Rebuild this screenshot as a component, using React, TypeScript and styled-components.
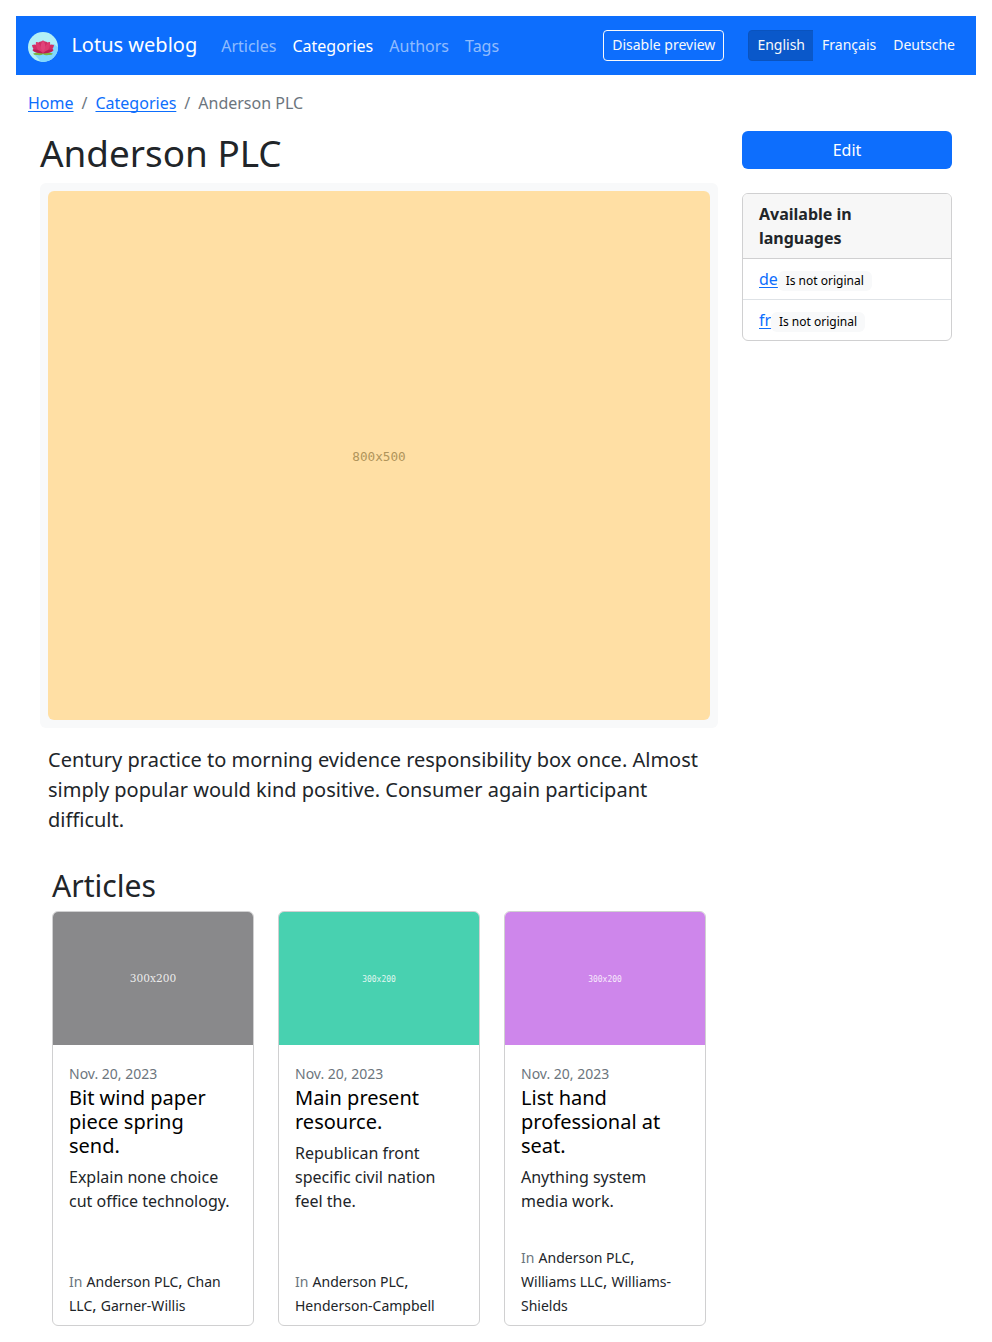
import React from "react";
import styled, { createGlobalStyle } from "styled-components";

const GlobalStyle = createGlobalStyle`
  *, *::before, *::after { box-sizing: border-box; }
  body {
    margin: 0;
    background: #fff;
    color: #212529;
    font: 400 16px/1.5 "Noto Sans", "Liberation Sans", sans-serif;
  }
  h1, h2, h5, p, ul, ol { margin: 0; padding: 0; }
  ul, ol { list-style: none; }
`;

const Page = styled.div`
  padding: 16px;
`;

const Navbar = styled.nav`
  display: flex;
  align-items: center;
  height: 59px;
  padding: 0 12px;
  background: #0d6efd;
`;

const Brand = styled.a`
  display: flex;
  align-items: flex-start;
  gap: 13.4px;
  height: 32px;
  margin-right: 16px;
  color: #fff;
  font-size: 20px;
  line-height: 30px;
  white-space: nowrap;
  svg { display: block; margin-top: 2px; }
`;

const BrandName = styled.span`
  display: block;
`;

const NavLinks = styled.ul`
  display: flex;
  flex: 1;
  padding-top: 1px;
`;

const NavLink = styled.li<{ $active?: boolean }>`
  padding: 8px;
  color: ${(p) => (p.$active ? "#fff" : "rgba(255, 255, 255, 0.55)")};
`;

const SmallButton = styled.button`
  height: 31px;
  padding: 3px 8px 5px;
  border: 1px solid #f8f9fa;
  border-radius: 4px;
  background: transparent;
  color: #f8f9fa;
  font: 400 14px/21px "Noto Sans", sans-serif;
  white-space: nowrap;
`;

const LanguageGroup = styled.div`
  display: flex;
  margin-left: 24px;
`;

const LanguageButton = styled(SmallButton)<{ $active?: boolean }>`
  border-color: ${(p) => (p.$active ? "#0a53be" : "#0d6efd")};
  border-radius: ${(p) => (p.$active ? "4px 0 0 4px" : "0")};
  background: ${(p) => (p.$active ? "#0a58ca" : "#0d6efd")};
  & + & { margin-left: -1px; }
`;

const Breadcrumb = styled.ol`
  display: flex;
  margin: 16px 12px;
`;

const Crumb = styled.li`
  color: #6c757d;
  & + &::before {
    content: "/";
    padding: 0 8px;
  }
`;

const Link = styled.a`
  color: #0d6efd;
  text-decoration: underline 1px;
  text-decoration-skip-ink: none;
  text-underline-offset: 2px;
`;

const Columns = styled.div`
  display: grid;
  grid-template-columns: 678px 210px;
  column-gap: 24px;
  align-items: start;
  padding: 0 24px;
`;

const Main = styled.main`
  min-width: 0;
`;

const Title = styled.h1`
  margin-bottom: 8px;
  font-size: 36.88px;
  font-weight: 400;
  line-height: 1.2;
`;

const CoverFrame = styled.div`
  padding: 8px;
  border-radius: 6px;
  background: #f8f9fa;
`;

const Cover = styled.div`
  display: flex;
  align-items: center;
  justify-content: center;
  height: 529px;
  padding-top: 3px;
  border-radius: 6px;
  background: #ffdfa4;
  color: #b0945a;
  font: 12.7px/1 "DejaVu Sans Mono", monospace;
`;

const Lead = styled.p`
  padding: 16.6px 8px 0;
  font-size: 20px;
  line-height: 30px;
`;

const Articles = styled.section`
  padding: 33px 12px 0;
`;

const SectionTitle = styled.h2`
  margin-bottom: 7px;
  font-size: 30.13px;
  font-weight: 400;
  line-height: 1.2;
`;

const ArticleGrid = styled.div`
  display: grid;
  grid-template-columns: repeat(3, 1fr);
  gap: 24px;
`;

const ArticleCard = styled.article`
  display: flex;
  flex-direction: column;
  overflow: hidden;
  border: 1px solid #d0d0d1;
  border-radius: 6px;
`;

const Thumbnail = styled.div<{ $color: string; $serif?: boolean }>`
  display: flex;
  align-items: center;
  justify-content: center;
  height: 133.33px;
  padding-top: ${(p) => (p.$serif ? "0" : "2px")};
  background: ${(p) => p.$color};
  color: rgba(255, 255, 255, 0.85);
  font: ${(p) => (p.$serif ? '10.6px/1 "DejaVu Serif", serif' : '8px/1 "DejaVu Sans Mono", monospace')};
`;

const ArticleBody = styled.div`
  flex: 1;
  padding: 16.7px 16px 32px;
`;

const ArticleDate = styled.div`
  color: #6c757d;
  font-size: 14px;
  line-height: 24px;
`;

const ArticleTitle = styled.h5`
  margin-bottom: 7.3px;
  color: #000;
  font-size: 20px;
  font-weight: 400;
  line-height: 24px;
`;

const ArticleFooter = styled.div`
  padding: 0 16px 8px;
  line-height: 24px;
`;

const Small = styled.span<{ $muted?: boolean }>`
  color: ${(p) => (p.$muted ? "#6c757d" : "#212529")};
  font-size: 14px;
  line-height: 1;
`;

const EditButton = styled.button`
  display: block;
  width: 100%;
  height: 38px;
  margin-bottom: 24px;
  border: 0;
  border-radius: 6px;
  background: #0d6efd;
  color: #fff;
  font: 400 16px/24px "Noto Sans", sans-serif;
`;

const LanguagesCard = styled.div`
  overflow: hidden;
  border: 1px solid #d0d0d1;
  border-radius: 6px;
`;

const LanguagesHeader = styled.div`
  padding: 8px 16px;
  border-bottom: 1px solid #d0d0d1;
  background: #f7f7f7;
  font-weight: 700;
`;

const LanguageItem = styled.li`
  height: 40px;
  padding: 8px 16px;
  & + & {
    height: 41px;
    border-top: 1px solid #dee2e6;
  }
`;

const Badge = styled.span`
  display: inline-block;
  padding: 4.2px 7.8px;
  border-radius: 6px;
  background: #f8f9fa;
  color: #000;
  font-size: 12px;
  line-height: 1;
  vertical-align: baseline;
`;

const LotusLogo = () => (
  <svg width="30" height="30" viewBox="0 0 30 30" aria-hidden="true">
    <defs>
      <clipPath id="disc"><circle cx="15" cy="15" r="15" /></clipPath>
    </defs>
    <g clipPath="url(#disc)">
      <rect width="30" height="30" fill="#b2f0f6" />
      <path d="M6 22 26 12l6 5v14H14z" fill="#80d8ff" />
      <path d="M5 21.800Q8 19.500 15 20.500q7-1 10 1.300-1.500 1.700-5 1.200-2.500.8-5-.8-2.500 1.600-5 .8-3.500.5-5-1.200Z" fill="#7cb342" />
      <path d="M4 13q2.500-.7 4-.3-.3-1.500 0-2.700 1.500 0 2.500.6 1-1.100 2.500-1.100l2-1 2 1q1.500 0 2.500 1.100 1-.6 2.500-.6.3 1.200 0 2.700 1.500-.4 4 .3-.3 2.500-1.500 4l1 1.500q-3 3-10.500 2.700Q7.500 21.500 4.500 18.500l1-1.500Q4.300 15.500 4 13Z" fill="#d12e65" />
      <path d="M8 10q5 1.500 7 10.500Q17 11.500 22 10q.5 5-2.500 8.500L15 21l-4.500-2.500Q7.500 15 8 10Z" fill="#dc3b70" />
      <path d="M15 8.500q3 3.500 2 8L15 20.500l-2-4q-1-4.500 2-8Z" fill="#e0447a" />
      <path d="M4.500 17.500q7-.5 10.500 3.800-7 .4-10.500-3.800Zm21 0q-7-.5-10.500 3.800 7 .4 10.500-3.800Z" fill="#b91d55" />
    </g>
  </svg>
);

const articles = [
  {
    color: "#89898b",
    serif: true,
    title: "Bit wind paper piece spring send.",
    text: "Explain none choice cut office technology.",
    categories: ["Anderson PLC", "Chan LLC", "Garner-Willis"],
  },
  {
    color: "#48d1b0",
    title: "Main present resource.",
    text: "Republican front specific civil nation feel the.",
    categories: ["Anderson PLC", "Henderson-Campbell"],
  },
  {
    color: "#ce86eb",
    title: "List hand professional at seat.",
    text: "Anything system media work.",
    categories: ["Anderson PLC", "Williams LLC", "Williams-Shields"],
  },
];

export default function App() {
  return (
    <>
      <GlobalStyle />
      <Page>
        <Navbar>
          <Brand>
            <LotusLogo />
            <BrandName>Lotus weblog</BrandName>
          </Brand>
          <NavLinks>
            <NavLink>Articles</NavLink>
            <NavLink $active>Categories</NavLink>
            <NavLink>Authors</NavLink>
            <NavLink>Tags</NavLink>
          </NavLinks>
          <SmallButton>Disable preview</SmallButton>
          <LanguageGroup>
            <LanguageButton $active>English</LanguageButton>
            <LanguageButton>Français</LanguageButton>
            <LanguageButton>Deutsche</LanguageButton>
          </LanguageGroup>
        </Navbar>
        <Breadcrumb>
          <Crumb><Link>Home</Link></Crumb>
          <Crumb><Link>Categories</Link></Crumb>
          <Crumb>Anderson PLC</Crumb>
        </Breadcrumb>
        <Columns>
          <Main>
            <Title>Anderson PLC</Title>
            <CoverFrame><Cover>800x500</Cover></CoverFrame>
            <Lead>
              Century practice to morning evidence responsibility box once. Almost simply popular
              would kind positive. Consumer again participant difficult.
            </Lead>
            <Articles>
              <SectionTitle>Articles</SectionTitle>
              <ArticleGrid>
                {articles.map((a) => (
                  <ArticleCard key={a.title}>
                    <Thumbnail $color={a.color} $serif={a.serif}>300x200</Thumbnail>
                    <ArticleBody>
                      <ArticleDate>Nov. 20, 2023</ArticleDate>
                      <ArticleTitle>{a.title}</ArticleTitle>
                      <p>{a.text}</p>
                    </ArticleBody>
                    <ArticleFooter>
                      <Small $muted>In</Small>{" "}
                      {a.categories.map((c, i) => (
                        <React.Fragment key={c}>
                          {i > 0 && ", "}
                          <Small>{c}</Small>
                        </React.Fragment>
                      ))}
                    </ArticleFooter>
                  </ArticleCard>
                ))}
              </ArticleGrid>
            </Articles>
          </Main>
          <aside>
            <EditButton>Edit</EditButton>
            <LanguagesCard>
              <LanguagesHeader>Available in languages</LanguagesHeader>
              <ul>
                <LanguageItem><Link>de</Link><Badge>Is not original</Badge></LanguageItem>
                <LanguageItem><Link>fr</Link><Badge>Is not original</Badge></LanguageItem>
              </ul>
            </LanguagesCard>
          </aside>
        </Columns>
      </Page>
    </>
  );
}
